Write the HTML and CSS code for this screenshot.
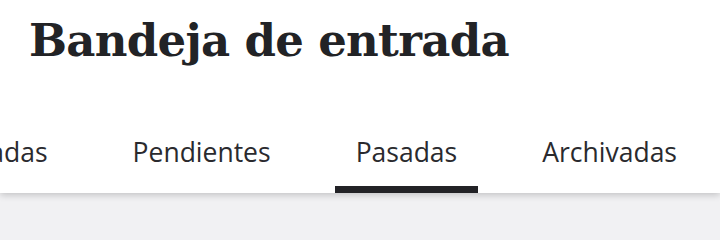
FILE: index.html
```html
<!DOCTYPE html>
<html lang="es">
<head>
<meta charset="utf-8">
<title>Bandeja de entrada</title>
<link rel="stylesheet" href="styles.css">
</head>
<body>
<header class="header">
  <h1 class="title">Bandeja de entrada</h1>
  <nav class="tabs">
    <a class="tab">Confirmadas</a>
    <a class="tab">Pendientes</a>
    <a class="tab tab-active">Pasadas</a>
    <a class="tab">Archivadas</a>
  </nav>
</header>
<main class="content"></main>
</body>
</html>
```
FILE: styles.css
```css
html, body {
  margin: 0;
  padding: 0;
  background: #f1f1f3;
}
body {
  min-height: 207px;
}
.header {
  background: #ffffff;
  box-shadow: 0 2px 7px rgba(0, 0, 0, 0.2);
  position: relative;
  z-index: 1;
}
.title {
  margin: 0;
  padding: 13px 0 0 29px;
  height: 59px;
  font-family: "DejaVu Serif", serif;
  font-weight: bold;
  font-size: 45px;
  line-height: 56px;
  color: #222326;
  letter-spacing: -0.7px;
}
.tabs {
  display: flex;
  justify-content: flex-end;
  gap: 43px;
  overflow: hidden;
  padding: 0 22px 0 0;
  margin-top: 62px;
}
.tab {
  flex: none;
  padding: 0 21px;
  height: 59px;
  box-sizing: border-box;
  font-family: "Open Sans", sans-serif;
  font-size: 26.5px;
  line-height: 36px;
  color: #2a2a2e;
  border-bottom: 7px solid transparent;
}
.tab-active {
  border-bottom-color: #222226;
}
```
